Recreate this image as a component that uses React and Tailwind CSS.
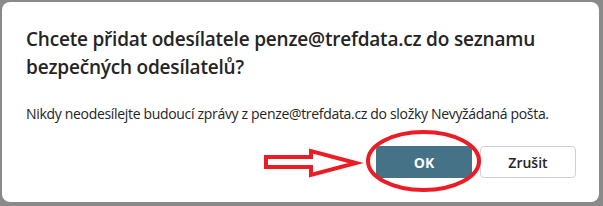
export default function App() {
  return (
    <div className="relative w-[603px] h-[206px] bg-[#8a8a8a] overflow-hidden pt-[2px] pl-[2px]" style={{ fontFamily: '"Open Sans", "Noto Sans", sans-serif' }}>
      <div className="w-[597px] h-[200px] bg-white rounded-lg pt-[23px] pl-[24px] pr-[23px] flex flex-col">
        <h1 className="text-[19px] leading-[28px] tracking-[-0.2px] font-semibold text-[#242424]">
          Chcete přidat odesílatele penze@trefdata.cz do seznamu bezpečných odesílatelů?
        </h1>
        <p className="mt-[23px] text-[14px] leading-[20px] tracking-[-0.32px] text-[#242424]">
          Nikdy neodesílejte budoucí zprávy z penze@trefdata.cz do složky Nevyžádaná pošta.
        </p>
        <div className="mt-[22px] flex justify-end gap-2">
          <button className="w-[96px] h-[32px] rounded bg-[#457287] text-white text-[14px] font-bold">OK</button>
          <button className="w-[96px] h-[32px] rounded bg-white border border-[#d1d1d1] text-[#242424] text-[14px] font-semibold">Zrušit</button>
        </div>
      </div>
      <svg className="absolute left-0 top-0 pointer-events-none" width="603" height="206" viewBox="0 0 603 206">
        <polygon points="266,157 311,157 311,151 356,163 311,175 311,167 266,167" fill="none" stroke="#ec1c24" strokeWidth="4" strokeLinejoin="miter" />
        <ellipse cx="423.5" cy="161" rx="55.5" ry="29" fill="none" stroke="#ec1c24" strokeWidth="4" />
      </svg>
    </div>
  );
}
